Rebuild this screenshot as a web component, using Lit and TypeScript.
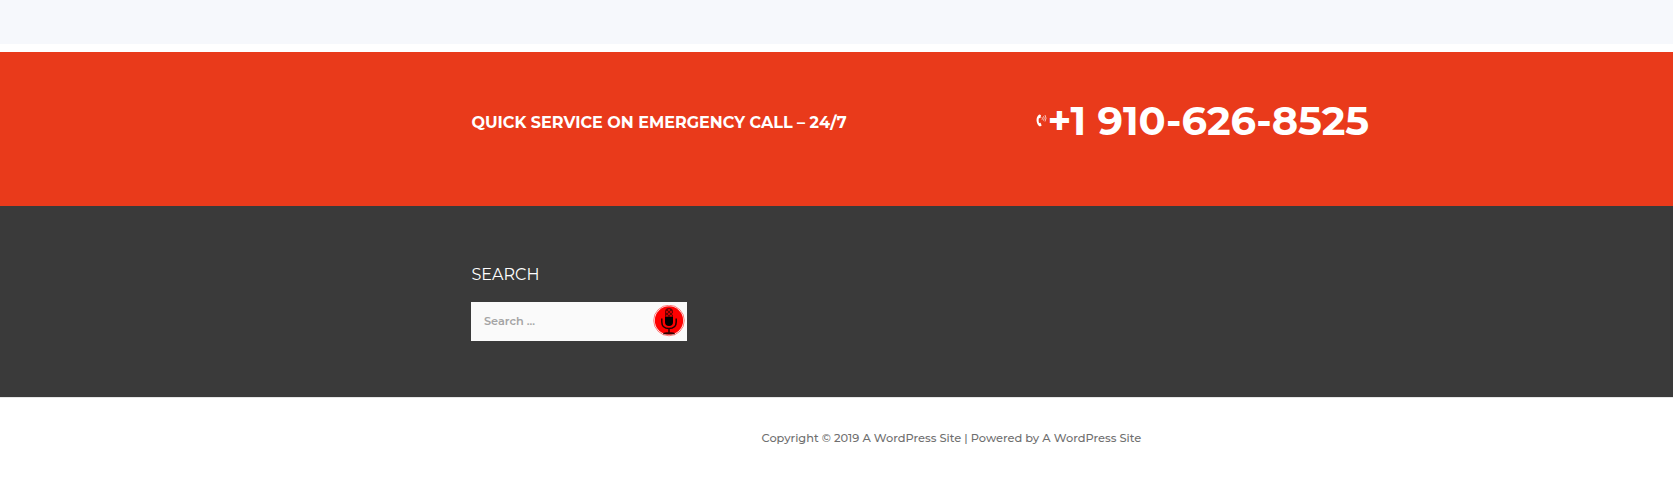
import { LitElement, html, css } from "lit";
import { customElement } from "lit/decorators.js";

@customElement("app-root")
export class AppRoot extends LitElement {
  static styles = css`
    :host {
      display: block;
      height: 479px;
      overflow: hidden;
      background: #fff;
      font-family: Montserrat, Inter, sans-serif;
    }
    .strip { height: 44px; margin-bottom: 8px; background: #f6f8fc; }
    .inner { width: 951px; margin-left: 471px; }
    .call { height: 154px; background: #e93a1b; color: #fff; }
    .call .inner { display: grid; grid-template-columns: 565px 1fr; }
    .call-title {
      margin: 61px 0 0;
      padding-left: 0.5px;
      font-size: 16px;
      line-height: 20px;
      font-weight: 700;
      white-space: nowrap;
    }
    .phone { display: flex; align-items: center; height: 48px; margin-top: 45px; }
    .phone svg { flex: none; width: 11px; height: 13px; margin: -2px 0.5px 0 0; }
    .number {
      font-size: 40px;
      line-height: 48px;
      font-weight: 700;
      white-space: nowrap;
    }
    .widgets { height: 191px; background: #3a3a3a; }
    .widgets .inner { padding-top: 59px; }
    .widget-title {
      margin: 0;
      padding-left: 0.5px;
      color: #fff;
      font-size: 16px;
      line-height: 20px;
      font-weight: 400;
    }
    .search {
      display: flex;
      align-items: center;
      box-sizing: border-box;
      width: 216px;
      height: 39px;
      margin-top: 17px;
      padding: 0 2px 2px 13px;
      background: #fafafa;
    }
    .search input {
      flex: 1;
      min-width: 0;
      padding: 0;
      border: 0;
      outline: 0;
      background: none;
      font: 600 11.3px/20px Montserrat, Inter, sans-serif;
    }
    .search input::placeholder { color: #a5a5a5; opacity: 1; }
    .mic { flex: none; padding: 0; border: 0; background: none; width: 32px; height: 32px; }
    .mic svg { display: block; }
    .copy {
      padding: 30px 0 0 761.5px;
      border-top: 1px solid #e6e6e6;
      color: #6f6f6f;
      font-size: 11.4px;
      line-height: 20px;
      font-weight: 500;
      white-space: nowrap;
    }
  `;

  render() {
    return html`
      <div class="strip"></div>
      <section class="call">
        <div class="inner">
          <h4 class="call-title">QUICK SERVICE ON EMERGENCY CALL – 24/7</h4>
          <div class="phone">
            <svg viewBox="0 0 11 13" fill="none" stroke="#fff">
              <path d="M5 1 3.200.5C1.200 2 .3 4.400.6 7c.3 2.600 1.500 4.600 3.400 5.500l1.700-1-1.200-2.700-1.400.3C2.600 7.600 2.500 5.800 2.900 4.300l1.600-.3z" fill="#fff" stroke="none"/>
              <path d="M6 3.200q.8 1.200 0 2.600M7.500 2.200q1.400 2 0 4.400M9 1q2 3 0 6.500" stroke-width=".8" opacity=".85"/>
            </svg>
            <span class="number">+1 910-626-8525</span>
          </div>
        </div>
      </section>
      <section class="widgets">
        <div class="inner">
          <h4 class="widget-title">SEARCH</h4>
          <form class="search">
            <input type="text" placeholder="Search ..." />
            <button class="mic" type="button" aria-label="Voice search">
              <svg width="32" height="32" viewBox="0 0 32 32">
                <circle cx="16" cy="15.500" r="15.300" fill="#fff" stroke="#f22" stroke-width=".6"/>
                <circle cx="16" cy="15.500" r="14.200" fill="#f00"/>
                <path d="M12 12V7q0-4 4-4t4 4v5z" fill="#6d0000"/>
                <path d="M13 6h2v2h-2zm4 0h2v2h-2zm-2 2h2v2h-2zm4 0h1v2h-1zM13 10h2v1.500h-2zm4 0h2v1.500h-2zM15 4h2v2h-2z" fill="#d00000"/>
                <path d="M12 12h8v5q0 4-4 4t-4-4z"/>
                <path d="M8.800 13.500V17q0 6.500 7.200 6.500t7.200-6.500v-3.500M16 23.500V28" fill="none" stroke="#250000" stroke-width="1.500"/>
                <path d="M10 29.200q0-2 3.500-2h5q3.500 0 3.500 2z" fill="#300"/>
              </svg>
            </button>
          </form>
        </div>
      </section>
      <footer class="copy">Copyright © 2019 A WordPress Site | Powered by A WordPress Site</footer>
    `;
  }
}
